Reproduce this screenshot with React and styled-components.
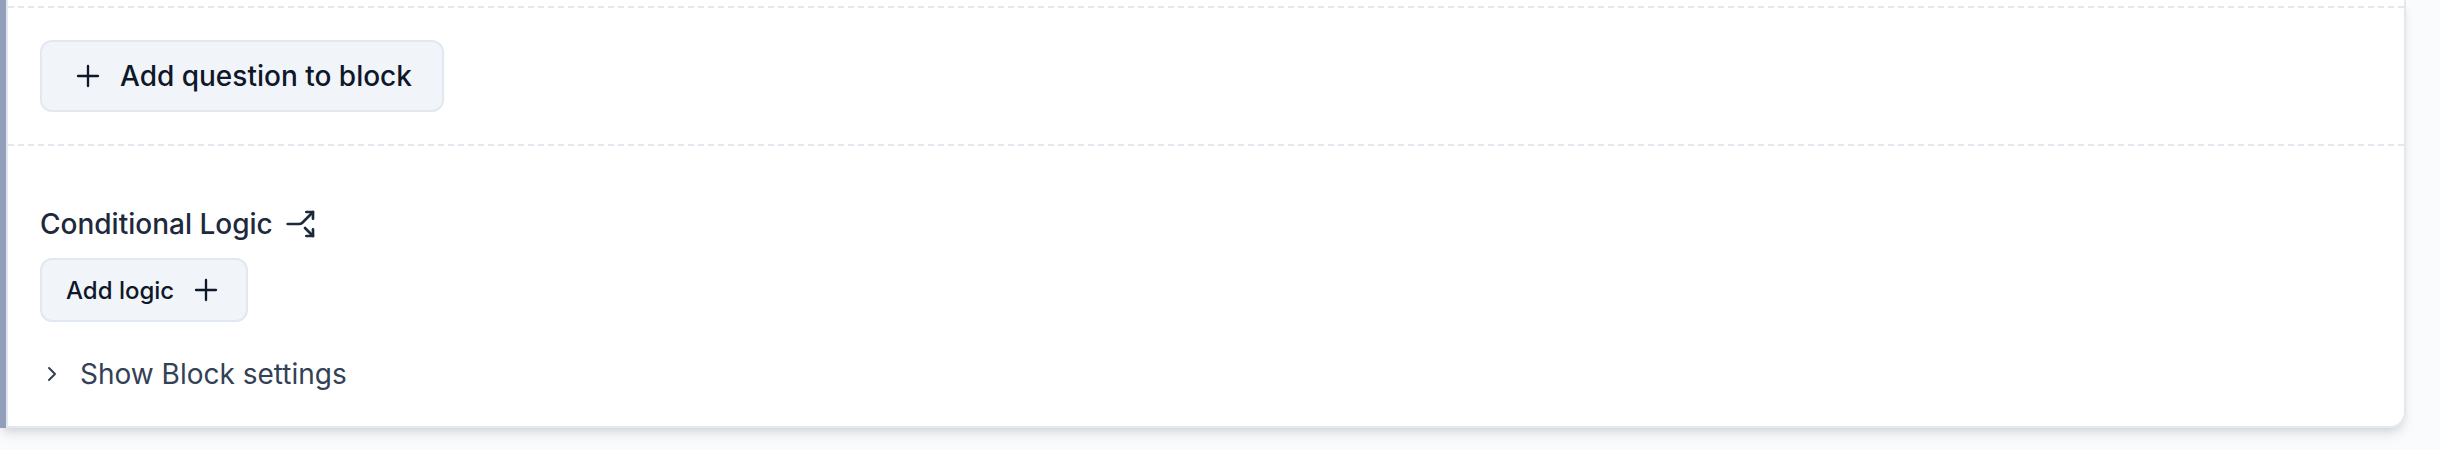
import React, { useState } from 'react'
import styled, { createGlobalStyle } from "styled-components";
import { ChevronRight, Split } from 'lucide-react'

const GlobalStyle = createGlobalStyle`
  * {
    box-sizing: border-box;
  }

  body {
    margin: 0;
    background: #fafbfd;
    color: #0f172a;
    font-family: Inter, "Liberation Sans", sans-serif;
  }
`;

const Page = styled.main`
  padding-right: 34px;
  padding-bottom: 22px;
`;

const BlockCard = styled.section`
  display: flex;
  border-radius: 0 0 16px 0;
  box-shadow: 0 8px 12px -2px rgba(0, 0, 0, 0.1), 0 4px 8px -4px rgba(0, 0, 0, 0.1);
`;

const BlockStripe = styled.div`
  width: 6px;
  flex: none;
  background: #919fba;
`;

const BlockBody = styled.div`
  flex: 1;
  padding-top: 6px;
  background: white;
  border: 2px solid #e2e8f0;
  border-top: none;
  border-radius: 0 0 16px 0;
`;

const QuestionRow = styled.div`
  padding: 32px;
  border: dashed #e2e8f0;
  border-width: 2px 0;
`;

const LogicRow = styled.div`
  display: flex;
  flex-direction: column;
  align-items: flex-start;
  padding: 58px 32px 32px;
`;

const Heading = styled.h2`
  display: flex;
  align-items: center;
  gap: 12px;
  margin: 0 0 14px;
  color: #1e293b;
  font-size: 28px;
  font-weight: 500;
  line-height: 40px;
`;

const SplitIcon = styled(Split)`
  transform: rotate(90deg);
`;

const Button = styled.button`
  display: inline-flex;
  align-items: center;
  gap: 16px;
  height: ${props => props.$small ? "64px" : "72px"};
  padding: 0 ${props => props.$small ? "24px" : "30px"};
  color: #0f172a;
  background: #f1f5f9;
  border: 2px solid #e2e8f0;
  border-radius: 12px;
  font-family: inherit;
  font-size: ${props => props.$small ? "24px" : "28px"};
  font-weight: 500;
  cursor: pointer;

  &:hover {
    background: #e2e8f0;
  }
`;

const SettingsToggle = styled.button`
  display: flex;
  align-items: center;
  gap: 16px;
  margin-top: 32px;
  padding: 0;
  color: #334155;
  background: none;
  border: none;
  font-family: inherit;
  font-size: 28px;
  line-height: 40px;
  cursor: pointer;
`;

const ToggleIcon = styled(ChevronRight)`
  transform: ${props => props.$open ? "rotate(90deg)" : "none"};
`;

const PlusIcon = () => (
  <svg width="32" height="32" viewBox="0 0 24 24" fill="none" stroke="currentColor" strokeWidth="1.75" strokeLinecap="round" aria-hidden="true">
    <path d="M12 4.5v15M4.5 12h15" />
  </svg>
)

const App = () => {

  const [open, setOpen] = useState(false)

  return (
    <>
      <GlobalStyle />
      <Page>
        <BlockCard>
          <BlockStripe />
          <BlockBody>
            <QuestionRow>
              <Button type="button">
                <PlusIcon />
                Add question to block
              </Button>
            </QuestionRow>
            <LogicRow>
              <Heading>
                Conditional Logic
                <SplitIcon size={32} />
              </Heading>
              <Button type="button" $small>
                Add logic
                <PlusIcon />
              </Button>
              <SettingsToggle type="button" aria-expanded={open} onClick={() => setOpen(!open)}>
                <ToggleIcon size={24} $open={open} />
                {open ? "Hide" : "Show"} Block settings
              </SettingsToggle>
            </LogicRow>
          </BlockBody>
        </BlockCard>
      </Page>
    </>
  )
}

export default App
